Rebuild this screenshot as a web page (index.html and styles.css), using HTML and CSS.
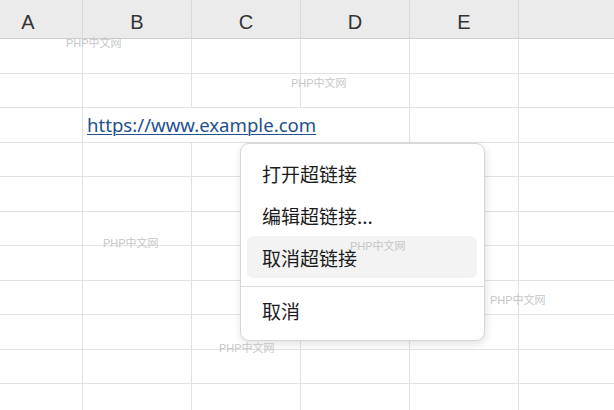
FILE: index.html
```html
<!DOCTYPE html>
<html lang="zh-CN">
  <head>
    <meta charset="UTF-8" />
    <meta name="viewport" content="width=device-width, initial-scale=1.0" />
    <title>超链接菜单</title>
    <link rel="stylesheet" href="styles.css">
  </head>
  <body>
    <div class="sheet">
      <div class="cols">
        <div class="col">A</div>
        <div class="col">B</div>
        <div class="col">C</div>
        <div class="col">D</div>
        <div class="col">E</div>
        <div class="col"></div>
      </div>
      <div class="row"><div></div><div></div><div></div><div></div><div></div><div></div></div>
      <div class="row"><div></div><div></div><div></div><div></div><div></div><div></div></div>
      <div class="row">
        <div></div>
        <!-- text runs over C and D, so no gridlines there -->
        <div class="cell-link"><a href="#">https://www.example.com</a></div>
        <div></div><div></div>
      </div>
      <div class="row"><div></div><div></div><div></div><div></div><div></div><div></div></div>
      <div class="row"><div></div><div></div><div></div><div></div><div></div><div></div></div>
      <div class="row"><div></div><div></div><div></div><div></div><div></div><div></div></div>
      <div class="row"><div></div><div></div><div></div><div></div><div></div><div></div></div>
      <div class="row"><div></div><div></div><div></div><div></div><div></div><div></div></div>
      <div class="row"><div></div><div></div><div></div><div></div><div></div><div></div></div>
      <div class="row"><div></div><div></div><div></div><div></div><div></div><div></div></div>
      <div class="row"><div></div><div></div><div></div><div></div><div></div><div></div></div>
    </div>

    <!-- menu opened on the link cell -->
    <div class="menu">
      <div class="item">打开超链接</div>
      <div class="item">编辑超链接...</div>
      <div class="item hover">取消超链接</div>
      <div class="sep"></div>
      <div class="item">取消</div>
    </div>

    <span class="mark" style="left:66px;top:37px">PHP中文网</span>
    <span class="mark" style="left:291px;top:77px">PHP中文网</span>
    <span class="mark" style="left:103px;top:237px">PHP中文网</span>
    <span class="mark" style="left:350px;top:240px">PHP中文网</span>
    <span class="mark" style="left:490px;top:294px">PHP中文网</span>
    <span class="mark" style="left:219px;top:342px">PHP中文网</span>
  </body>
</html>
```

FILE: styles.css
```css
body {
  margin: 0;
  background: #fff;
  overflow: hidden;
  font-family: "Noto Sans", "Noto Sans CJK SC", sans-serif;
}

.sheet {
  margin-left: -26px;
}

.cols,
.row {
  display: grid;
  grid-template-columns: repeat(6, 109px);
}

.cols {
  height: 39px;
  background: #ebebeb;
  border-bottom: 1px solid #cfcfcf;
  box-sizing: border-box;
}
.col {
  border-right: 1px solid #d9d9d9;
  padding-top: 2px;
  text-align: center;
  font-family: "Liberation Sans", sans-serif;
  font-size: 20px;
  line-height: 40px;
  color: #333;
}

.row {
  height: 34.5px;
}
.row > div {
  border-right: 1px solid #e2e2e2;
  border-bottom: 1px solid #e2e2e2;
  box-sizing: border-box;
}

.cell-link {
  grid-column: span 3;
  padding-left: 4px;
  white-space: nowrap;
  line-height: 34px;
  font-size: 18.6px;
}
.cell-link a {
  color: #23508e;
  text-decoration: underline;
  text-underline-offset: 2px;
  text-decoration-thickness: 1px;
}

.menu {
  position: absolute;
  left: 240px;
  top: 143px;
  width: 245px;
  box-sizing: border-box;
  padding: 8px 0 9px;
  background: #fff;
  border: 1px solid #d6d6d6;
  border-radius: 9px;
  box-shadow: 1px 3px 8px rgba(0, 0, 0, 0.12);
}
.item {
  margin: 0 7px 0 6px;
  padding: 3px 0 0 15px;
  height: 42px;
  box-sizing: border-box;
  border-radius: 6px;
  font-family: "Noto Sans CJK SC", sans-serif;
  font-size: 19px;
  line-height: 38px;
  color: #1c1c1c;
}
.hover {
  background: #f3f3f3;
}
.sep {
  height: 1px;
  margin: 8px 0 2px;
  background: #dedede;
}

.mark {
  position: absolute;
  font-family: "Liberation Sans", "Noto Sans CJK SC", sans-serif;
  font-size: 11px;
  line-height: 13px;
  color: #c6c6c6;
  white-space: nowrap;
}
```
